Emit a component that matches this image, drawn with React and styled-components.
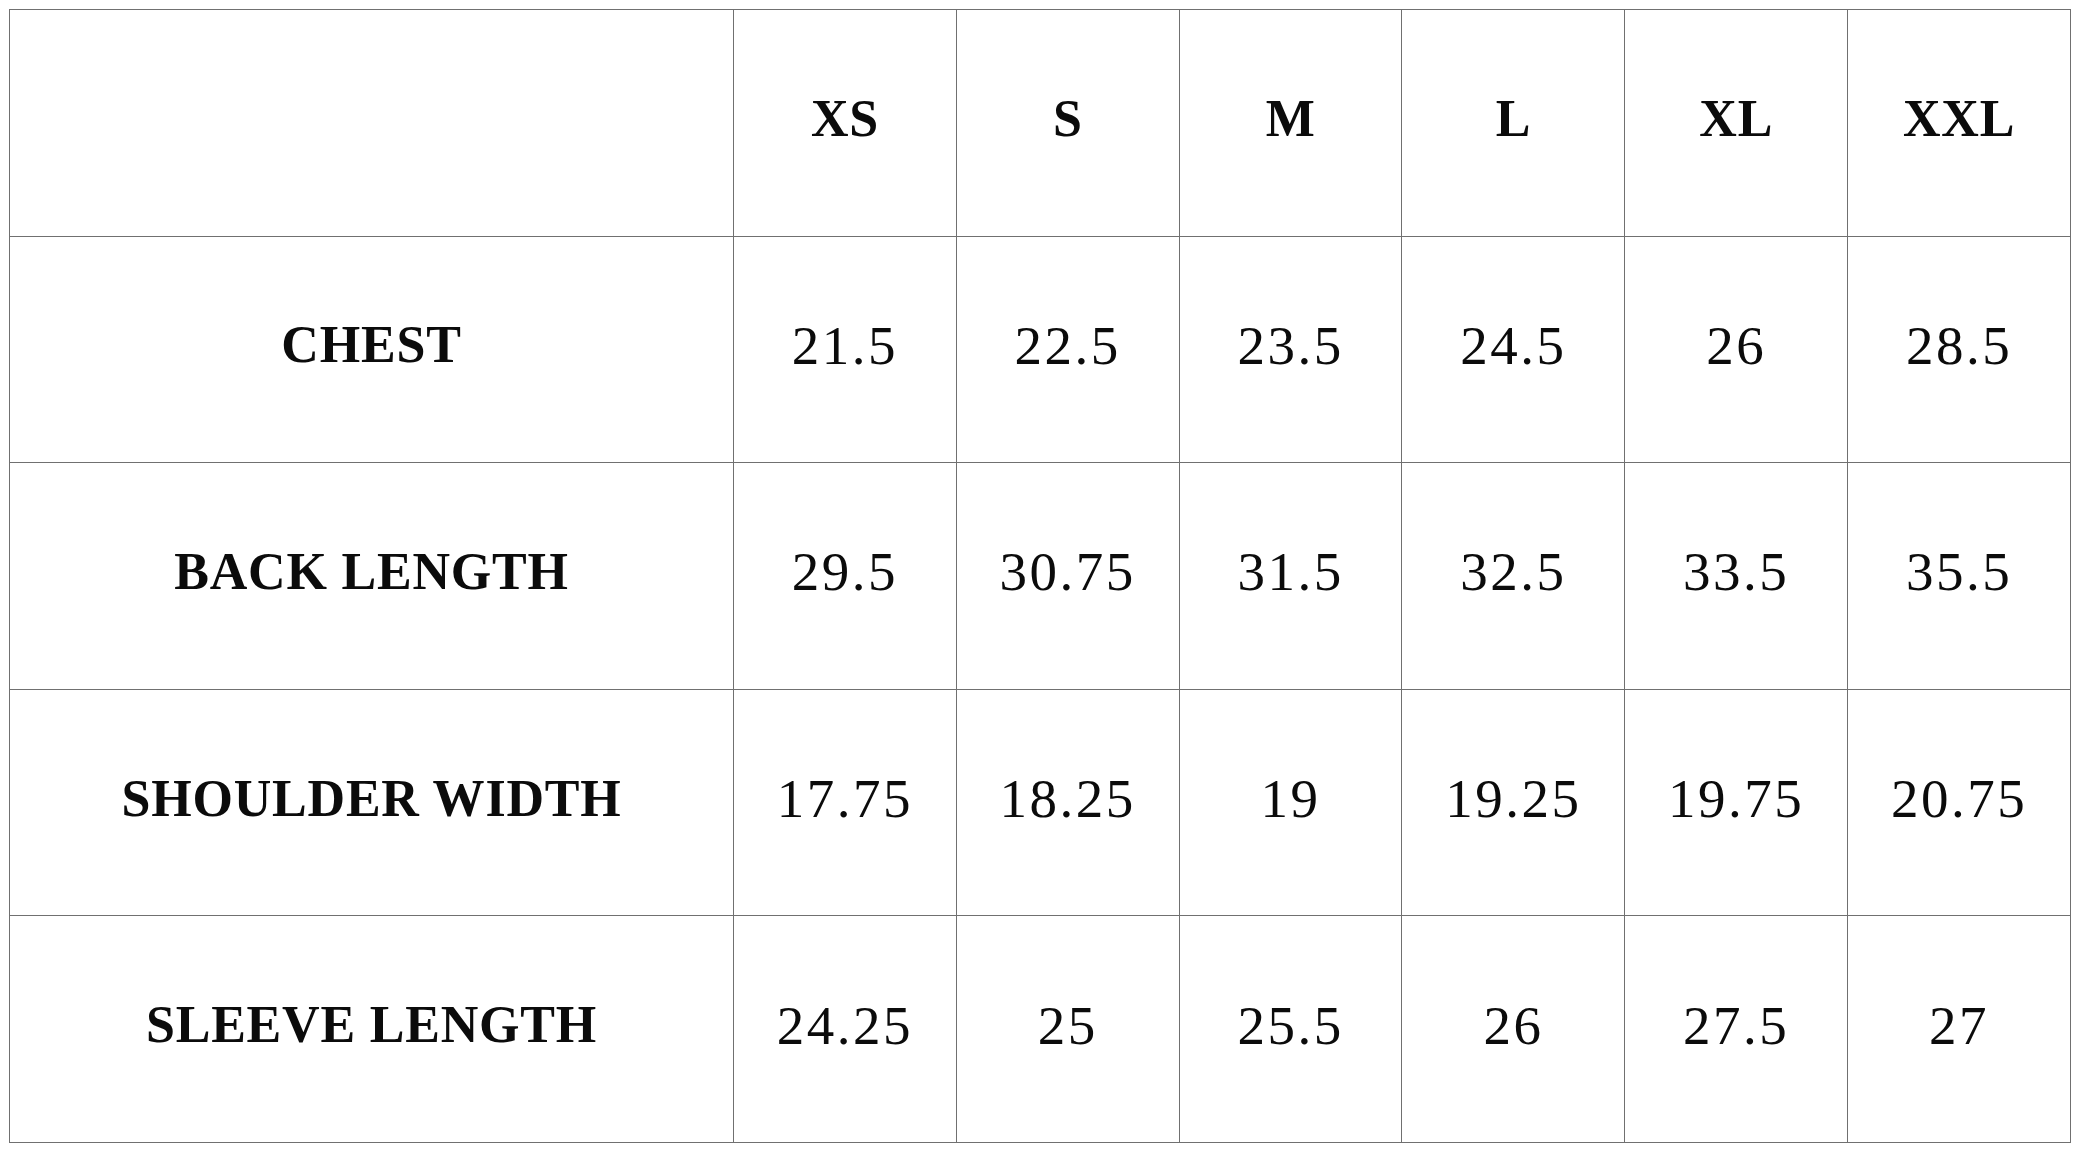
import React from "react";
import styled, { createGlobalStyle } from "styled-components";

const sizes = ["XS", "S", "M", "L", "XL", "XXL"];

const rows = [
  { label: "CHEST", values: ["21.5", "22.5", "23.5", "24.5", "26", "28.5"] },
  { label: "BACK LENGTH", values: ["29.5", "30.75", "31.5", "32.5", "33.5", "35.5"] },
  { label: "SHOULDER WIDTH", values: ["17.75", "18.25", "19", "19.25", "19.75", "20.75"] },
  { label: "SLEEVE LENGTH", values: ["24.25", "25", "25.5", "26", "27.5", "27"] },
];

function App() {
  return (
    <>
      <GlobalStyle />
      <Page>
        <Chart>
          <Cell />
          {sizes.map((s) => (
            <Cell key={s}>
              <Head>{s}</Head>
            </Cell>
          ))}
          {rows.map((row) => (
            <React.Fragment key={row.label}>
              <Cell>
                <Head>{row.label}</Head>
              </Cell>
              {row.values.map((v, i) => (
                <Cell key={i}>
                  <Value>{v}</Value>
                </Cell>
              ))}
            </React.Fragment>
          ))}
        </Chart>
      </Page>
    </>
  );
}

export default App;

const GlobalStyle = createGlobalStyle`
  html, body {
    margin: 0;
    padding: 0;
    background: #ffffff;
  }
  body {
    font-family: "Liberation Serif", "DejaVu Serif", serif;
    color: #0b0b0b;
  }
`;

const Page = styled.div`
  width: 2081px;
  height: 1150px;
  padding: 9px 0 0 9px;
  box-sizing: border-box;
  background: #ffffff;
`;

const Chart = styled.div`
  width: 2062px;
  height: 1134px;
  box-sizing: border-box;
  padding: 1px;
  display: grid;
  grid-template-columns: 723px repeat(6, 1fr);
  grid-template-rows: repeat(5, 1fr);
  gap: 1px;
  background: #707070;
`;

const Cell = styled.div`
  background: #ffffff;
  display: flex;
  align-items: center;
  justify-content: center;
  padding-bottom: 8px;
  box-sizing: border-box;
`;

const Head = styled.span`
  font-size: 52px;
  font-weight: 700;
  letter-spacing: 0.8px;
  line-height: 1.15;
  white-space: nowrap;
`;

const Value = styled.span`
  font-size: 55px;
  font-weight: 400;
  letter-spacing: 2.5px;
  line-height: 1.15;
  white-space: nowrap;
`;
